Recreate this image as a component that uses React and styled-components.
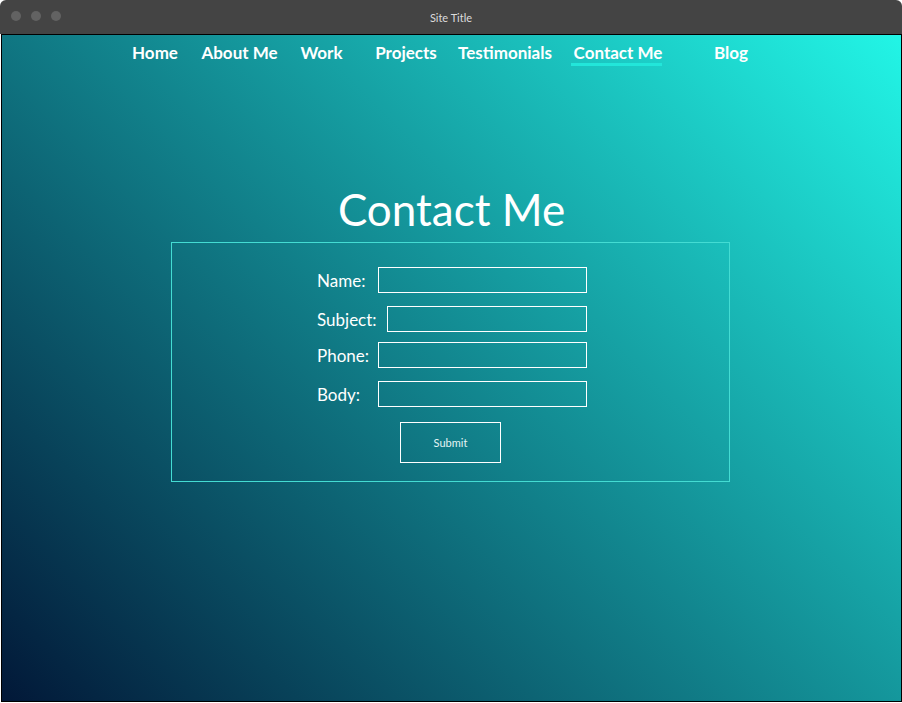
import React from 'react';
import styled, { createGlobalStyle } from 'styled-components';

const GlobalStyle = createGlobalStyle`
  html, body {
    margin: 0;
    padding: 0;
    background: #ffffff;
  }
  * {
    box-sizing: border-box;
  }
`;

const Window = styled.div`
  width: 902px;
  height: 702px;
  display: flex;
  flex-direction: column;
  font-family: Lato, 'Liberation Sans', sans-serif;
`;

const TitleBar = styled.div`
  position: relative;
  height: 34px;
  flex-shrink: 0;
  background: #444444;
  border-radius: 6px 6px 0 0;
  display: flex;
  align-items: center;
  justify-content: center;
  color: #dcdcdc;
  font-size: 11px;
`;

const Dots = styled.div`
  position: absolute;
  left: 11px;
  top: 11px;
  display: flex;
  gap: 10px;
`;

const Dot = styled.span`
  width: 10px;
  height: 10px;
  border-radius: 50%;
  background: #626262;
`;

const Page = styled.main`
  flex: 1;
  margin-left: 1px;
  border: 1px solid #000;
  background: linear-gradient(45deg, #021838 0%, #22f5e6 100%);
  display: flex;
  flex-direction: column;
  align-items: center;
  color: #fff;
`;

const Nav = styled.nav`
  display: flex;
  align-items: center;
  height: 36px;
  margin-top: -1px;
  padding-right: 5px;
`;

const NavItem = styled.a`
  display: flex;
  justify-content: center;
  width: ${({ w }) => w}px;
  font-weight: 700;
  font-size: 17px;
  color: #fff;
  text-decoration: none;
`;

const NavLabel = styled.span`
  position: relative;
  padding: 0 2px;

  &::after {
    content: '';
    display: ${({ active }) => (active ? 'block' : 'none')};
    position: absolute;
    left: -1px;
    right: 2px;
    bottom: -3px;
    height: 3px;
    background: #22e6da;
  }
`;

const Heading = styled.h1`
  margin: 117px 0 0;
  font-weight: 400;
  font-size: 44px;
  line-height: 1;
  letter-spacing: 0;
`;

const FormBox = styled.form`
  margin: 11px 2px 0 0;
  width: 559px;
  border: 1px solid #44dcd3;
  padding: 24px 0 18px;
  display: flex;
  flex-direction: column;
  align-items: center;
`;

const Row = styled.label`
  display: flex;
  align-items: center;
  width: 270px;
  margin-left: 3px;
  margin-bottom: ${({ gap }) => gap}px;
  font-size: 17px;
`;

const LabelText = styled.span`
  min-width: 52px;
  margin-right: ${({ space }) => space || 9}px;
  white-space: nowrap;
`;

const Field = styled.input`
  width: ${({ w }) => w}px;
  height: 26px;
  background: transparent;
  border: 1px solid #ffffff;
  outline: none;
  color: #fff;
`;

const Submit = styled.button`
  width: 101px;
  height: 41px;
  background: transparent;
  border: 1px solid #ffffff;
  color: #e4f4f4;
  font-family: Lato, 'Liberation Sans', sans-serif;
  font-size: 11px;
`;

const links = [
  { label: 'Home', w: 82 },
  { label: 'About Me', w: 87 },
  { label: 'Work', w: 77 },
  { label: 'Projects', w: 92 },
  { label: 'Testimonials', w: 106 },
  { label: 'Contact Me', w: 120, active: true },
  { label: 'Blog', w: 106 },
];

const fields = [
  { label: 'Name:', w: 209, gap: 13 },
  { label: 'Subject:', w: 201, gap: 10, space: 11 },
  { label: 'Phone:', w: 209, gap: 13 },
  { label: 'Body:', w: 209, gap: 15 },
];

const App = () => (
  <>
    <GlobalStyle />
    <Window>
      <TitleBar>
        <Dots>
          <Dot />
          <Dot />
          <Dot />
        </Dots>
        Site Title
      </TitleBar>
      <Page>
        <Nav>
          {links.map((l) => (
            <NavItem key={l.label} w={l.w} href="#">
              <NavLabel active={l.active}>{l.label}</NavLabel>
            </NavItem>
          ))}
        </Nav>
        <Heading>Contact Me</Heading>
        <FormBox onSubmit={(e) => e.preventDefault()}>
          {fields.map((f) => (
            <Row key={f.label} gap={f.gap}>
              <LabelText space={f.space}>{f.label}</LabelText>
              <Field w={f.w} />
            </Row>
          ))}
          <Submit type="submit">Submit</Submit>
        </FormBox>
      </Page>
    </Window>
  </>
);

export default App;
